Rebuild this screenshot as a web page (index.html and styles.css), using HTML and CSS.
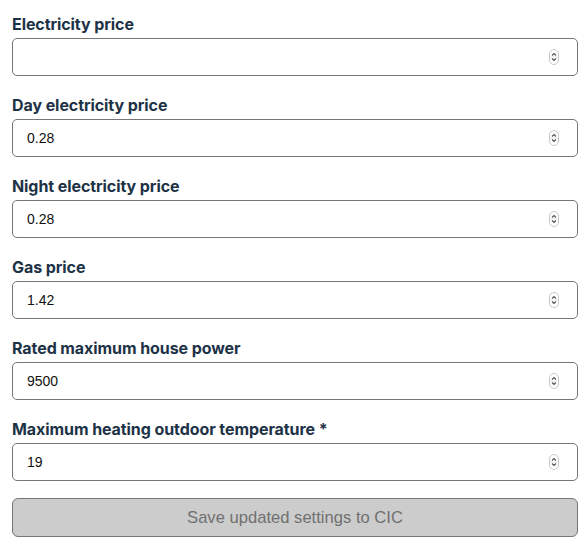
FILE: index.html
```html
<!DOCTYPE html>
<html>
<head>
<meta charset="utf-8">
<link rel="stylesheet" href="styles.css">
</head>
<body>
<form class="settings">
  <div class="field">
    <label class="label">Electricity price</label>
    <div class="input-wrap">
      <input class="input" type="text" value="">
      <svg class="spin" viewBox="0 0 10 16" width="10" height="16"><rect x="0.5" y="0.5" width="9" height="15" rx="4.5" fill="#fff" stroke="#c8c8c8"/><path d="M3 6.5 L5 4.5 L7 6.5" fill="none" stroke="#555" stroke-width="1.2"/><path d="M3 9.5 L5 11.5 L7 9.5" fill="none" stroke="#555" stroke-width="1.2"/><line x1="1" y1="8" x2="9" y2="8" stroke="#ddd" stroke-width="0.8"/></svg>
    </div>
  </div>
  <div class="field">
    <label class="label">Day electricity price</label>
    <div class="input-wrap">
      <input class="input" type="text" value="0.28">
      <svg class="spin" viewBox="0 0 10 16" width="10" height="16"><rect x="0.5" y="0.5" width="9" height="15" rx="4.5" fill="#fff" stroke="#c8c8c8"/><path d="M3 6.5 L5 4.5 L7 6.5" fill="none" stroke="#555" stroke-width="1.2"/><path d="M3 9.5 L5 11.5 L7 9.5" fill="none" stroke="#555" stroke-width="1.2"/><line x1="1" y1="8" x2="9" y2="8" stroke="#ddd" stroke-width="0.8"/></svg>
    </div>
  </div>
  <div class="field">
    <label class="label">Night electricity price</label>
    <div class="input-wrap">
      <input class="input" type="text" value="0.28">
      <svg class="spin" viewBox="0 0 10 16" width="10" height="16"><rect x="0.5" y="0.5" width="9" height="15" rx="4.5" fill="#fff" stroke="#c8c8c8"/><path d="M3 6.5 L5 4.5 L7 6.5" fill="none" stroke="#555" stroke-width="1.2"/><path d="M3 9.5 L5 11.5 L7 9.5" fill="none" stroke="#555" stroke-width="1.2"/><line x1="1" y1="8" x2="9" y2="8" stroke="#ddd" stroke-width="0.8"/></svg>
    </div>
  </div>
  <div class="field">
    <label class="label">Gas price</label>
    <div class="input-wrap">
      <input class="input" type="text" value="1.42">
      <svg class="spin" viewBox="0 0 10 16" width="10" height="16"><rect x="0.5" y="0.5" width="9" height="15" rx="4.5" fill="#fff" stroke="#c8c8c8"/><path d="M3 6.5 L5 4.5 L7 6.5" fill="none" stroke="#555" stroke-width="1.2"/><path d="M3 9.5 L5 11.5 L7 9.5" fill="none" stroke="#555" stroke-width="1.2"/><line x1="1" y1="8" x2="9" y2="8" stroke="#ddd" stroke-width="0.8"/></svg>
    </div>
  </div>
  <div class="field">
    <label class="label">Rated maximum house power</label>
    <div class="input-wrap">
      <input class="input" type="text" value="9500">
      <svg class="spin" viewBox="0 0 10 16" width="10" height="16"><rect x="0.5" y="0.5" width="9" height="15" rx="4.5" fill="#fff" stroke="#c8c8c8"/><path d="M3 6.5 L5 4.5 L7 6.5" fill="none" stroke="#555" stroke-width="1.2"/><path d="M3 9.5 L5 11.5 L7 9.5" fill="none" stroke="#555" stroke-width="1.2"/><line x1="1" y1="8" x2="9" y2="8" stroke="#ddd" stroke-width="0.8"/></svg>
    </div>
  </div>
  <div class="field">
    <label class="label">Maximum heating outdoor temperature *</label>
    <div class="input-wrap">
      <input class="input" type="text" value="19">
      <svg class="spin" viewBox="0 0 10 16" width="10" height="16"><rect x="0.5" y="0.5" width="9" height="15" rx="4.5" fill="#fff" stroke="#c8c8c8"/><path d="M3 6.5 L5 4.5 L7 6.5" fill="none" stroke="#555" stroke-width="1.2"/><path d="M3 9.5 L5 11.5 L7 9.5" fill="none" stroke="#555" stroke-width="1.2"/><line x1="1" y1="8" x2="9" y2="8" stroke="#ddd" stroke-width="0.8"/></svg>
    </div>
  </div>
  <button class="save" type="button" disabled>Save updated settings to CIC</button>
</form>
</body>
</html>
```
FILE: styles.css
```css
html, body {
  margin: 0;
  padding: 0;
  background: #ffffff;
}
.settings {
  display: flex;
  flex-direction: column;
  gap: 17px;
  padding: 12px 10px 0 12px;
  font-family: Inter, "Liberation Sans", sans-serif;
}
.field {
  display: flex;
  flex-direction: column;
  gap: 2px;
}
.label {
  font-size: 16px;
  line-height: 24px;
  font-weight: 700;
  letter-spacing: -0.08px;
  color: #1d3246;
}
.input-wrap {
  position: relative;
}
.input {
  display: block;
  box-sizing: border-box;
  width: 100%;
  height: 38px;
  margin: 0;
  padding: 0 14px;
  border: 1px solid #767676;
  border-radius: 5px;
  font-family: "Liberation Sans", Arial, sans-serif;
  font-size: 14px;
  color: #111;
  background: #fff;
  outline: none;
}
.spin {
  position: absolute;
  right: 19px;
  top: 11px;
}
.save {
  box-sizing: border-box;
  width: 100%;
  height: 39px;
  margin: 0;
  border: 1px solid #777;
  border-radius: 6px;
  background: #cccccc;
  color: #707070;
  font-family: "Liberation Sans", Arial, sans-serif;
  font-size: 16.6px;
}
```
